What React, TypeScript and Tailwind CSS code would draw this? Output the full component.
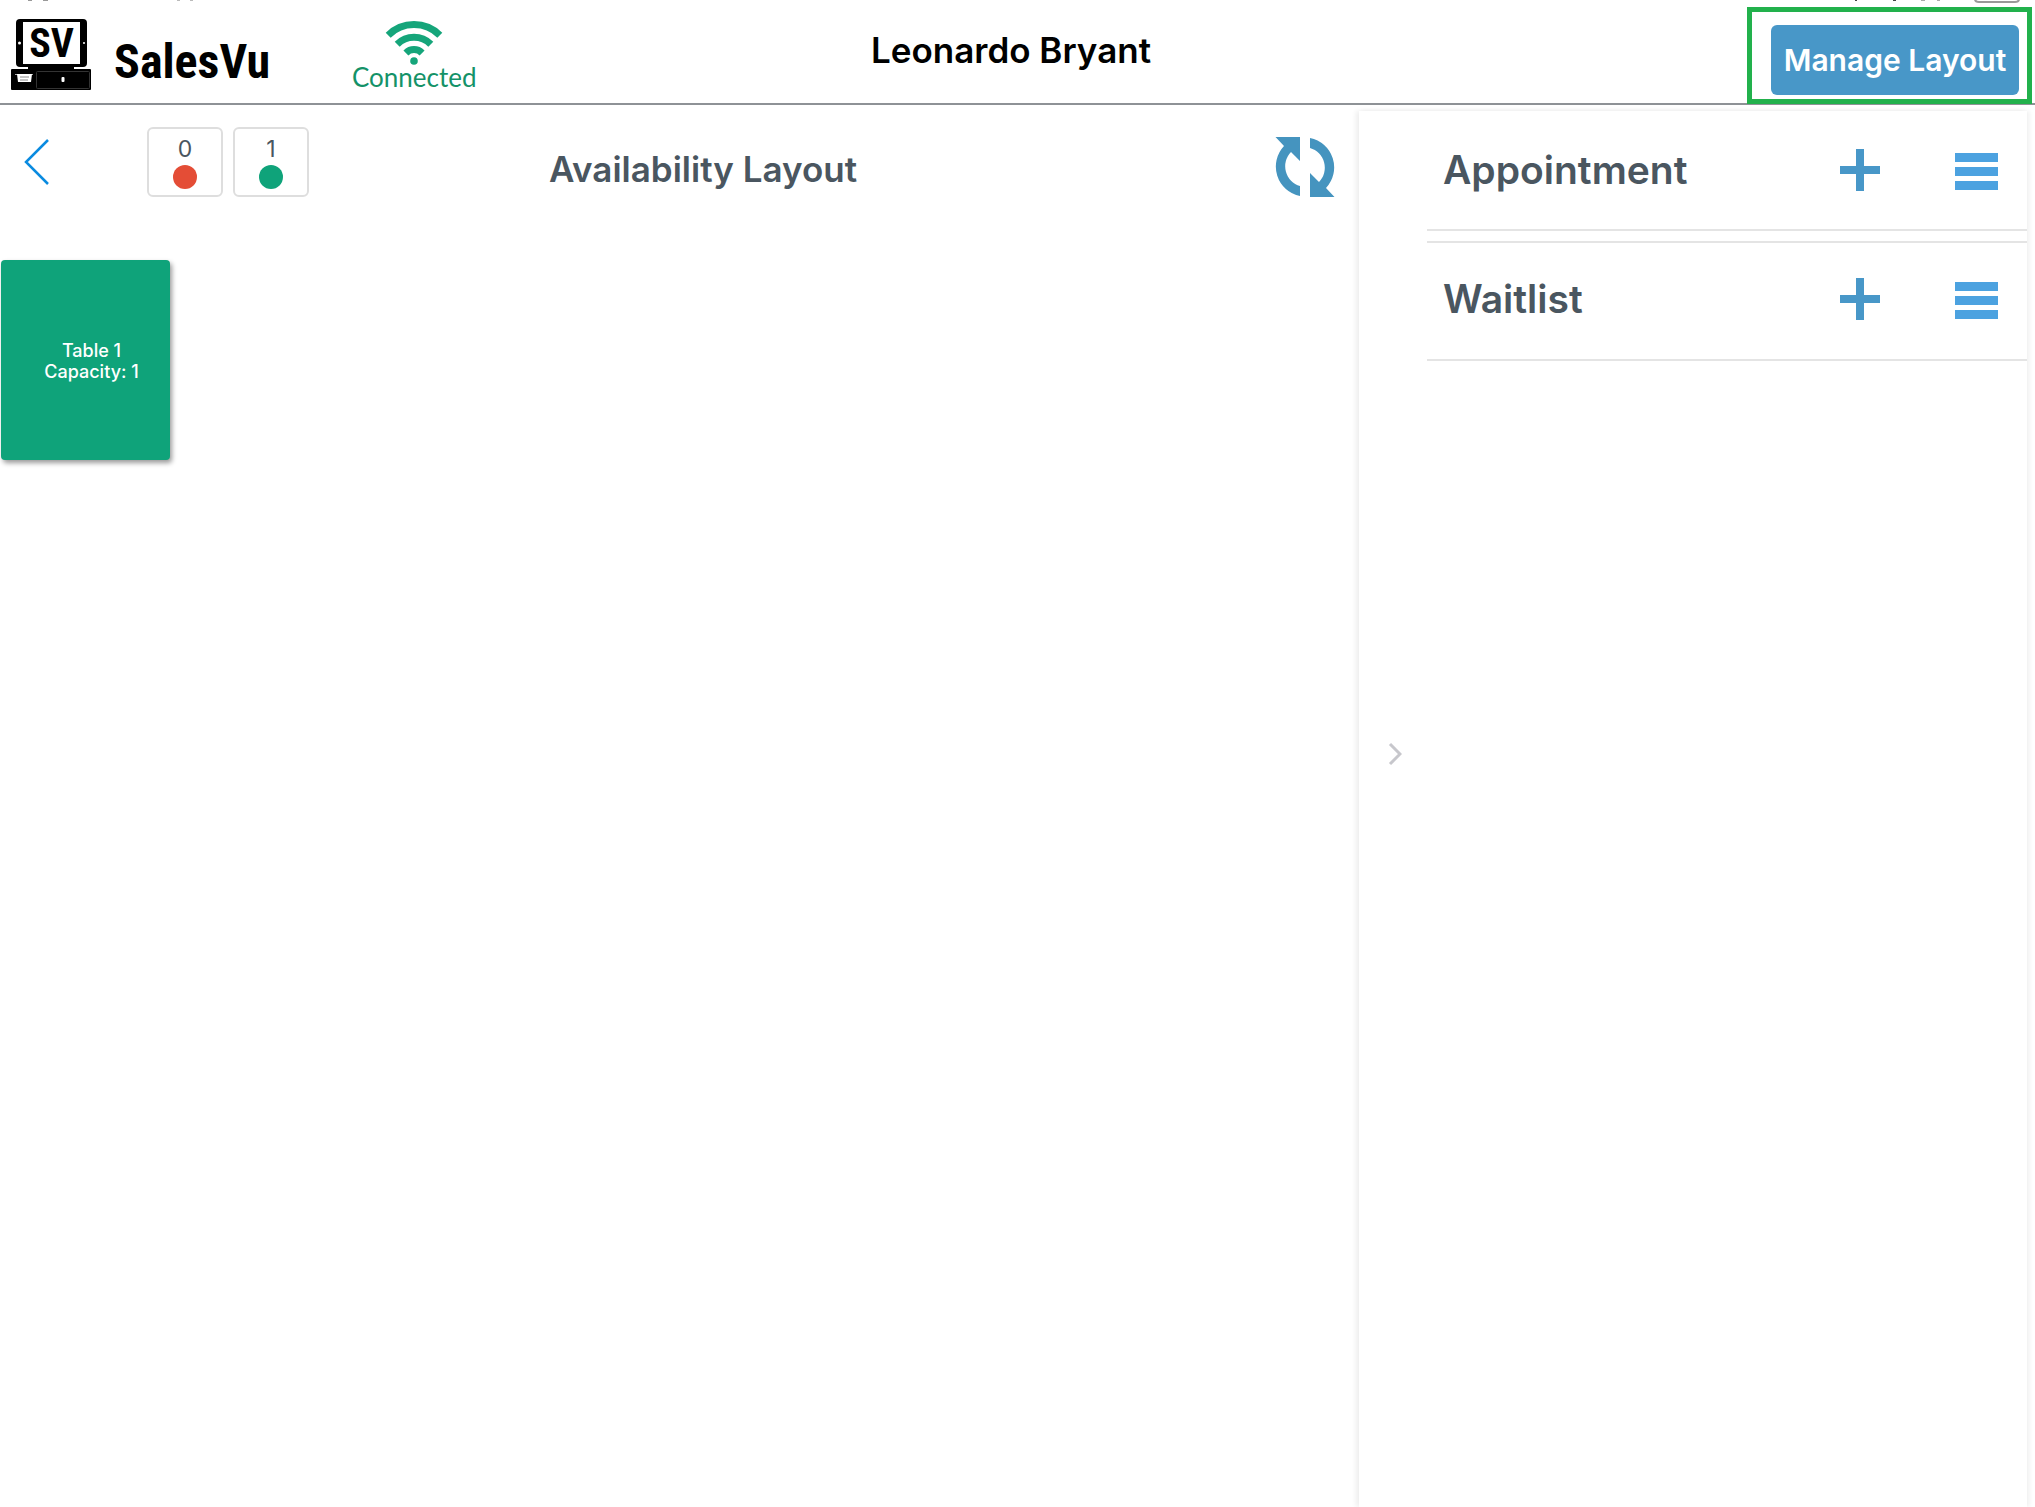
const label = 'font-["Inter",sans-serif] font-semibold';

function TerminalLogo() {
  return (
    <svg width="80" height="72" viewBox="0 0 80 72" aria-label="SV terminal" className="shrink-0">
      <rect x="5" y="0" width="71" height="48" rx="4" fill="#000" />
      <rect x="12" y="3" width="57" height="42" fill="#fff" />
      <circle cx="8.500" cy="24" r="1.500" fill="#fff" />
      <circle cx="73" cy="24" r="1" fill="#fff" />
      <text x="40.500" y="38" textAnchor="middle" fontFamily="Roboto Condensed, Roboto, sans-serif" fontWeight="700" fontSize="40">SV</text>
      <rect x="17" y="46" width="46" height="6" fill="#000" />
      <rect x="0" y="50" width="80" height="21" rx="1" fill="#000" />
      <rect x="25.500" y="52.500" width="53" height="17" rx="1" fill="none" stroke="#333" />
      <path d="M4 55h18v1H4z" fill="#aaa" />
      <path d="M6 55h15l-1 8H7z" fill="#fff" />
      <path d="M9 58h9M9 61h8" stroke="#888" />
      <rect x="50.500" y="58" width="3" height="5" rx="1" fill="#fff" />
    </svg>
  );
}

function Wifi() {
  return (
    <svg width="60" height="44" viewBox="0 0 60 44" fill="none" stroke="#15a57a" strokeWidth="7" aria-hidden="true">
      <path d="M4.200 14.200a36.500 36.500 0 0 1 51.600 0" />
      <path d="M13.200 23.200a23.750 23.750 0 0 1 33.600 0" />
      <path d="M21.900 31.900a11.500 11.500 0 0 1 16.200 0" />
      <circle cx="30" cy="40" r="3.800" fill="#15a57a" stroke="none" />
    </svg>
  );
}

function StatusBarEdge() {
  return (
    <div className="pointer-events-none absolute inset-x-0 top-0 flex justify-between" aria-hidden="true">
      <svg width="200" height="4" viewBox="0 0 200 4">
        <path d="M28 0h4M43 0h5" stroke="#999" strokeWidth="2" />
        <path d="M177 0h3M190 0h3" stroke="#bbb" strokeWidth="2" />
      </svg>
      <svg width="195" height="4" viewBox="0 0 195 4" fill="none">
        <path d="M15 0h2M53 0h3" stroke="#444" strokeWidth="2" />
        <path d="M81 0h4M97 0h3" stroke="#aaa" strokeWidth="2" />
        <path d="M135 -4v3q0 3 4 3h36q4 0 4-3v-3" stroke="#999" strokeWidth="2" />
      </svg>
    </div>
  );
}

function Section({ title, size }: { title: string; size: string }) {
  return (
    <section className={'flex items-center border-b-2 border-[#e4e4e4] pl-4 pr-[29px] ' + size}>
      <h2 className={'flex-1 text-[39px] leading-10 text-[#4a5660] ' + label}>{title}</h2>
      <button type="button" aria-label={'Add to ' + title} className="mr-[75px]">
        <svg width="40" height="42" viewBox="0 0 40 42" fill="#4897c8"><path d="M16 0h8v17h16v8H24v17h-8V25H0v-8h16z" /></svg>
      </button>
      <button type="button" aria-label={title + ' list'} className="flex flex-col gap-[5px] pt-[3px]">
        <span className="h-[9px] w-[43px] bg-[#4ca2e0]" />
        <span className="h-[9px] w-[43px] bg-[#4ca2e0]" />
        <span className="h-[9px] w-[43px] bg-[#4ca2e0]" />
      </button>
    </section>
  );
}

function Count({ value, color, name }: { value: number; color: string; name: string }) {
  return (
    <button type="button" aria-label={name + ': ' + value} className="flex h-[70px] w-[76px] flex-col items-center rounded-md border-2 border-[#dedede] pt-1">
      <span className="font-['Inter',sans-serif] text-[23px] leading-8 text-[#4a5660]">{value}</span>
      <span className={'size-6 rounded-full ' + color} />
    </button>
  );
}

export default function App() {
  return (
    <div className="flex min-h-screen flex-col bg-white">
      <header className="relative grid h-[105px] grid-cols-[1fr_auto_1fr] border-b-2 border-[#8e9296]">
        <StatusBarEdge />
        <div className="flex items-start pl-[11px] pt-[19px]">
          <TerminalLogo />
          <span className="ml-[23px] mt-[19px] w-[156px] font-['Roboto_Condensed','Liberation_Sans_Narrow','Open_Sans',sans-serif] text-[48px] font-bold leading-12 text-black">SalesVu</span>
          <div className="ml-[82px] flex flex-col items-center pt-[2px]">
            <Wifi />
            <span className="font-['Lato',sans-serif] text-[26px] leading-6 text-[#149268]">Connected</span>
          </div>
        </div>
        <h1 className={'pr-[13px] pt-[30px] text-[35px] leading-10 text-black ' + label}>Leonardo Bryant</h1>
        <div className="flex items-start justify-end pr-[3px] pt-[7px]">
          <div className="z-10 h-[97px] border-[5px] border-[#22b14c] bg-white pl-[19px] pr-2 pt-[13px]">
            <button type="button" className={'h-[70px] w-[248px] rounded-md bg-[#4897c8] text-[30px] text-white ' + label}>Manage Layout</button>
          </div>
        </div>
      </header>

      <div className="flex flex-1 pr-2 pt-[6px]">
        <main className="flex flex-1 flex-col">
          <div className="flex h-[149px] items-start pl-6 pr-6 pt-4">
            <button type="button" aria-label="Back" className="mt-3">
              <svg width="26" height="46" viewBox="0 0 26 46" fill="none" stroke="#0a8be0" strokeWidth="2.500"><path d="M24 1 2 23l22 22" /></svg>
            </button>
            <div className="ml-[97px] flex gap-[10px]">
              <Count value={0} color="bg-[#e44d36]" name="Occupied" />
              <Count value={1} color="bg-[#0fa37a]" name="Available" />
            </div>
            <h2 className={'mt-[22px] flex-1 pl-[240px] text-[35px] leading-10 text-[#4a5660] ' + label}>Availability Layout</h2>
            <button type="button" aria-label="Refresh" className="mt-[10px]">
              <svg width="60" height="60" viewBox="0 0 60 60" fill="#4594bf">
                <path d="M0.500 0H25v24l-9-9A20.500 20.500 0 0 0 25 49v10A30 30 0 0 1 9 9z" />
                <path d="M59.500 60H35V36l9 9A20.500 20.500 0 0 0 35 11V1A30 30 0 0 1 51 51z" />
              </svg>
            </button>
          </div>
          <button type="button" className="ml-px flex h-[200px] w-[169px] flex-col items-center justify-center rounded-sm bg-[#0fa37a] pl-3 pt-[2px] font-['Inter',sans-serif] text-[18px] font-medium leading-[21px] text-white shadow-[2px_3px_5px_rgba(0,0,0,0.4)]">
            <span>Table 1</span>
            <span>Capacity: 1</span>
          </button>
        </main>

        <aside className="flex w-[668px] shadow-[-3px_0_5px_rgba(0,0,0,0.07),3px_0_4px_rgba(0,0,0,0.05)]">
          <button type="button" aria-label="Collapse panel" className="flex w-[68px] items-center justify-center pl-1 pb-[110px]">
            <svg width="14" height="24" viewBox="0 0 14 24" fill="none" stroke="#c7c7cc" strokeWidth="3"><path d="m2 2 10 10L2 22" /></svg>
          </button>
          <div className="flex-1">
            <Section title="Appointment" size="h-[120px]" />
            <div className="mt-[10px] border-t-2 border-[#e4e4e4]">
              <Section title="Waitlist" size="h-[118px] pb-1" />
            </div>
          </div>
        </aside>
      </div>
    </div>
  );
}
